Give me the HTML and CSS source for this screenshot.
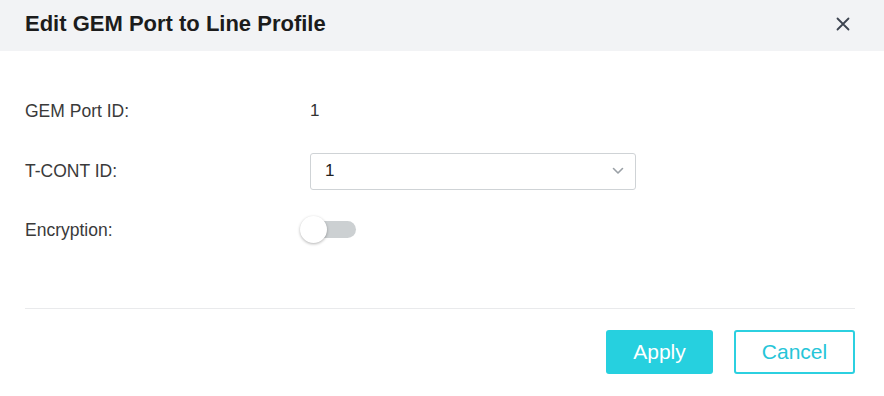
FILE: index.html
```html
<!DOCTYPE html>
<html>
<head>
<meta charset="utf-8">
<link rel="stylesheet" href="styles.css">
</head>
<body>
<div class="dialog">
  <div class="header">
    <div class="title">Edit GEM Port to Line Profile</div>
    <button class="close" aria-label="Close">
      <svg width="14" height="14" viewBox="0 0 14 14"><path d="M1.5 1.5 L12.5 12.5 M12.5 1.5 L1.5 12.5" stroke="#3d4450" stroke-width="1.8" stroke-linecap="round" fill="none"/></svg>
    </button>
  </div>
  <div class="body">
    <div class="row r1">
      <div class="label">GEM Port ID:</div>
      <div class="value">1</div>
    </div>
    <div class="row r2">
      <div class="label">T-CONT ID:</div>
      <div class="select">
        <span>1</span>
        <svg width="12" height="8" viewBox="0 0 12 8"><path d="M1.5 1.5 L6 6 L10.5 1.5" stroke="#9aa0a6" stroke-width="1.6" fill="none" stroke-linecap="round" stroke-linejoin="round"/></svg>
      </div>
    </div>
    <div class="row r3">
      <div class="label">Encryption:</div>
      <div class="switch"><span class="knob"></span></div>
    </div>
  </div>
  <div class="divider"></div>
  <div class="footer">
    <button class="btn primary">Apply</button>
    <button class="btn outline">Cancel</button>
  </div>
</div>
</body>
</html>
```

FILE: styles.css
```css
* { box-sizing: border-box; }
html, body { margin: 0; padding: 0; background: #fff; }
body { font-family: "Liberation Sans", Arial, sans-serif; width: 884px; height: 396px; overflow: hidden; }
.dialog { width: 884px; }
.header {
  height: 51px;
  background: #f2f3f5;
  display: flex;
  align-items: center;
  justify-content: space-between;
  padding: 0 34px 0 25px;
}
.title { font-size: 22px; font-weight: bold; color: #1c1c1c; margin-top: -3px; }
.close { background: none; border: 0; padding: 0; width: 14px; height: 14px; display: flex; margin-top: -4px; cursor: pointer; }
.body { padding: 41px 29px 0 25px; }
.row { display: flex; align-items: center; }
.r1 { height: 38px; margin-bottom: 11px; }
.r2 { height: 60px; }
.r3 { height: 58px; }
.label { width: 285px; font-size: 17.5px; color: #3a3a3a; }
.value { font-size: 17px; color: #333; }
.select {
  width: 326px;
  height: 37px;
  border: 1px solid #cfd3d6;
  border-radius: 3px;
  display: flex;
  align-items: center;
  justify-content: space-between;
  padding: 0 11px 0 14px;
  font-size: 17px;
  color: #222;
}
.r3 .label { width: 274px; }
.switch {
  position: relative;
  width: 56px;
  height: 18px;
  margin-left: 1px;
}
.switch::before {
  content: "";
  display: block;
  margin-left: 4px;
  width: 52px;
  height: 17px;
  border-radius: 9px;
  background: #ccd0d2;
}
.knob {
  position: absolute;
  left: 0;
  top: -5px;
  width: 27px;
  height: 27px;
  border-radius: 50%;
  background: #fff;
  box-shadow: 0 1px 3px rgba(0,0,0,0.3);
}
.divider { height: 1px; background: #e9eaec; margin: 49px 29px 0 25px; }
.footer {
  display: flex;
  justify-content: flex-end;
  gap: 21px;
  padding: 21px 29px 0 25px;
}
.btn {
  height: 44px;
  font-family: "Liberation Sans", Arial, sans-serif;
  font-size: 21px;
  border-radius: 3px;
  cursor: pointer;
}
.primary { width: 107px; background: #26d0df; color: #fff; border: 0; }
.outline { width: 121px; background: #fff; color: #26c5d8; border: 2px solid #2cd0e0; }
```
